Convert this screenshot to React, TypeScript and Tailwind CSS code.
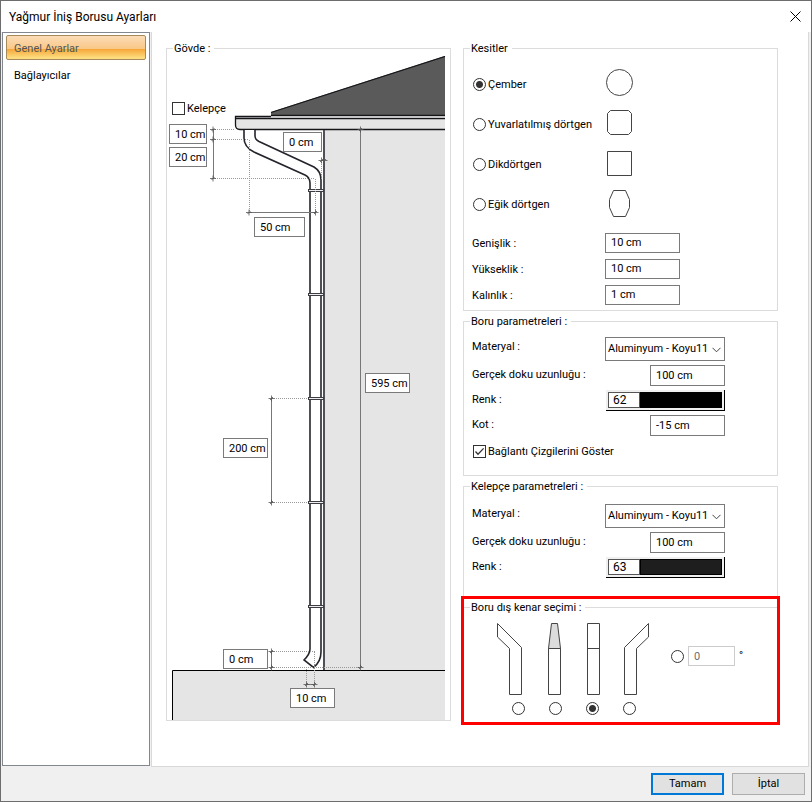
import { useState } from "react";
import type { ReactNode } from "react";
import clsx from "clsx";

const inputStyle = "border border-[#7a7a7a] bg-white pl-[5px] outline-none";
const radioStyle =
  "size-[13px] shrink-0 appearance-none rounded-full border border-[#333] bg-white checked:bg-[radial-gradient(circle,#333_3px,transparent_4px)]";

const Group = ({ title, className, children }: { title: string; className?: string; children: ReactNode }) => (
  <fieldset className={clsx("min-w-0 border-[#dcdcdc]", className)}>
    <legend className="ml-1.5 h-4 pr-1 pl-px leading-[18px]">{title}</legend>
    {children}
  </fieldset>
);

const Check = ({ label, defaultChecked }: { label: string; defaultChecked?: boolean }) => (
  <label className="flex h-4 items-center gap-0.5">
    <span className="relative flex">
      <input
        type="checkbox"
        defaultChecked={defaultChecked}
        className="peer size-[13px] appearance-none border border-[#333] bg-white"
      />
      <svg viewBox="0 0 13 13" className="pointer-events-none absolute inset-0 hidden size-[13px] peer-checked:block">
        <path d="M2.5 6.5 5 9.2 10.6 3.4" fill="none" stroke="#333" strokeWidth="1.3" />
      </svg>
    </span>
    <span className="pt-0.5">{label}</span>
  </label>
);

/* fields placed on the drawing */
const dimensions = [
  { name: "Oluk mesafesi", value: "10 cm", place: "left-[2px] top-[68px] w-[38px]" },
  { name: "Dirsek yüksekliği", value: "20 cm", place: "left-[2px] top-[91px] w-[38px]" },
  { name: "Duvar mesafesi", value: "0 cm", place: "left-[116px] top-[76px] w-[39px]" },
  { name: "Dirsek genişliği", value: "50 cm", place: "left-[87px] top-[161px] w-[51px]" },
  { name: "Boru yüksekliği", value: "595 cm", place: "left-[198px] top-[317px] w-[45px]" },
  { name: "Kelepçe aralığı", value: "200 cm", place: "left-[56px] top-[382px] w-[45px]" },
  { name: "Alt dirsek yüksekliği", value: "0 cm", place: "left-[56px] top-[593px] w-[45px]" },
  { name: "Alt dirsek genişliği", value: "10 cm", place: "left-[123px] top-[632px] w-[45px]" },
];

const ticks = [
  [213, 129.5], [213, 139.5], [213, 178.5],
  [249, 212.5], [315.5, 212.5],
  [321.5, 160.5], [324.5, 160.5],
  [271.5, 398.5], [271.5, 502.5],
  [271.5, 651.5], [271.5, 667.5],
  [306.5, 684.5], [314.5, 684.5],
  [360.5, 129.5], [360.5, 667.5],
];

const Drawing = () => (
  <svg width="283" height="664" viewBox="167 56 283 664" fill="none" className="block">
    <path d="M324 130H445V670H324z" fill="#e5e5e5" />
    <path d="M172.5 720V670.5H445V720" fill="#e5e5e5" />
    <path d="M172.5 720V670.5H445" stroke="#000" />
    <path d="M271 112 445 56V116H271z" fill="#5a5a5a" />
    <path d="M271 112.5 445 56.5M271 115.5H445" stroke="#15151a" strokeWidth="1.3" />
    <path d="M235.5 116.5V125Q235.5 129.5 240 129.5H445V118.5H235.5" fill="#e5e5e5" />
    <path d="M271 116.5H235.5V125Q235.5 129.5 240 129.5H445M235.5 118.5H445" stroke="#15151a" strokeWidth="1.3" />
    <path d="M324 130V670" stroke="#505158" strokeWidth="2" />
    <path
      d="M244 130V138C244 145 248 149 254 152L305 175Q310 177.5 310 183V649Q310 654 304 660L313.5 667.5C318 664 321 658 321 652V180C321 174 319 170 314 167L259 141.5Q255 139.5 255 136V130"
      fill="#fff"
      stroke="#24252b"
      strokeWidth="1.6"
    />
    {[190.5, 294.5, 398.5, 502.5, 606.5].map((y) => (
      <rect key={y} x="308.5" y={y - 1} width="15" height="2" fill="#eee" stroke="#3c3d42" />
    ))}
    <path
      d="M213.5 129.5V178.5M249 212.5H316M271.5 398V503M271.5 651V668M306 684.5H315M360.5 129V668"
      stroke="#777"
    />
    <path
      d="M213 129.5H235M213 139.5H249M213 178.5H315M249.5 140V213M315.5 179V213M321.5 160V180M272 398.5H308M272 502.5H308M272 651.5H315M272 667.5H360M306.5 669V684M314.5 652V684"
      stroke="#999"
      strokeDasharray="1 1"
    />
    {ticks.map(([x, y]) => (
      <path key={`${x} ${y}`} d={`M${x - 3} ${y}h6M${x} ${y - 3}v6M${x - 1.5} ${y + 1.5}l3 -3`} stroke="#555" strokeWidth="0.8" />
    ))}
  </svg>
);

const sections = [
  { name: "Çember", shape: <circle cx="14.5" cy="12.5" r="13" /> },
  { name: "Yuvarlatılmış dörtgen", shape: <path d="M5.5 .5h18l3 3v18l-3 3h-18l-3-3v-18z" /> },
  { name: "Dikdörtgen", shape: <path d="M2.5 1.5h24v24h-24z" /> },
  { name: "Eğik dörtgen", shape: <path d="M8.5 .5h12l4 9v8l-4 9h-12l-4-9v-8z" /> },
];

const edges = [
  { name: "Sola eğik", shape: <path d="M-2.5 .5 21.5 24.5V71.5H9.5V25.5L-2.5 14z" /> },
  {
    name: "Daralan",
    shape: (
      <>
        <path d="M14.5 .5h6l3 25h-12z" fill="#dcdcdc" />
        <path d="M11.5 25.5h12v46h-12z" />
      </>
    ),
  },
  { name: "Düz", shape: <path d="M13.5 .5h12v71h-12zM13.5 25.5h12" /> },
  { name: "Sağa eğik", shape: <path d="M37.5 .5 13.5 24.5V71.5H25.5V25.5L37.5 14z" /> },
];

const PipeParams = ({ id, color, swatch, children }: { id: string; color: string; swatch: string; children?: ReactNode }) => (
  <div className="grid grid-cols-[133px_120px] gap-y-1 leading-5">
    <label htmlFor={`${id}-material`}>Materyal :</label>
    <div className="relative">
      <select
        id={`${id}-material`}
        className="block h-6 w-full appearance-none border border-[#7a7a7a] bg-white pl-0.5 outline-none"
      >
        <option>Aluminyum - Koyu11</option>
      </select>
      <svg viewBox="0 0 9 6" className="pointer-events-none absolute top-2.5 right-1 h-1.5 w-[9px]">
        <path d="M.5 .8 4.5 4.8 8.5 .8" fill="none" stroke="#444" />
      </svg>
    </div>
    <label htmlFor={`${id}-length`}>Gerçek doku uzunluğu :</label>
    <input id={`${id}-length`} defaultValue="100 cm" className={clsx(inputStyle, "h-[21px] w-[75px] justify-self-end")} />
    <label htmlFor={`${id}-color`}>Renk :</label>
    <div className="ml-px flex h-[21px] border-r border-b border-black bg-[#f0f0f0] p-0.5">
      <input id={`${id}-color`} defaultValue={color} className="w-8 border border-[#555] bg-white px-1 text-xs outline-none" />
      <button aria-label="Renk seç" className={clsx("flex-1 border border-black", swatch)} />
    </div>
    {children}
  </div>
);

export default function App() {
  const [page, setPage] = useState("Genel Ayarlar");

  return (
    <div className="flex min-h-screen flex-col border border-[#6d6d6d] bg-[#f0f0f0] font-['Roboto',sans-serif] text-[11px] text-black">
      <header className="flex h-[31px] items-center justify-between bg-white pr-2.5 pl-2">
        <h1 className="text-xs">Yağmur İniş Borusu Ayarları</h1>
        <button aria-label="Kapat">
          <svg width="11" height="11" viewBox="0 0 11 11">
            <path d="M.5 .5 10.5 10.5M10.5 .5 .5 10.5" stroke="#000" />
          </svg>
        </button>
      </header>

      <main className="flex flex-1 gap-px pr-0.5 pl-px">
        <nav className="mb-px flex w-[148px] shrink-0 flex-col gap-0.5 border border-[#828790] bg-white px-[3px] py-0.5">
          {["Genel Ayarlar", "Bağlayıcılar"].map((name) => (
            <button
              key={name}
              onClick={() => setPage(name)}
              className={clsx(
                "h-[25px] rounded-xs border pt-[3px] pl-[7px] text-left",
                page === name
                  ? "border-[#a78a5a] bg-[linear-gradient(#fbdcb8_0%,#fac886_55%,#f6a436_56%,#fddd7f_95%)] text-[#555]"
                  : "border-transparent"
              )}
            >
              {name}
            </button>
          ))}
        </nav>

        <section className="grid flex-1 grid-cols-[285px_1fr] items-start gap-3 border-r border-b border-l border-[#d9d9d9] bg-white pt-2 pr-[30px] pb-10 pl-3.5">
          <Group title="Gövde :" className="border">
            <div className="relative">
              <Drawing />
              <div className="absolute top-11 left-[5px]">
                <Check label="Kelepçe" />
              </div>
              {dimensions.map((d) => (
                <input
                  key={d.name}
                  aria-label={d.name}
                  defaultValue={d.value}
                  className={clsx(inputStyle, "absolute h-5", d.place)}
                />
              ))}
            </div>
          </Group>

          <div className="flex flex-col">
            <Group title="Kesitler" className="border pb-[5px]">
              <div className="px-2 pt-2">
                {sections.map((s, i) => (
                  <label key={s.name} className="grid h-10 grid-cols-[133px_28px] items-center">
                    <span className="flex items-center gap-0.5 whitespace-nowrap pl-px">
                      <input type="radio" name="section" defaultChecked={i === 0} className={radioStyle} />
                      <span className="pt-0.5">{s.name}</span>
                    </span>
                    <svg width="28" height="28" viewBox="0 0 28 28" fill="none" stroke="#444" className="overflow-visible">
                      {s.shape}
                    </svg>
                  </label>
                ))}
                <div className="mt-[9px] grid grid-cols-[133px_75px] gap-y-1.5 leading-[22px]">
                  <label htmlFor="width" className="h-5">Genişlik :</label>
                  <input id="width" defaultValue="10 cm" className={clsx(inputStyle, "h-5")} />
                  <label htmlFor="height" className="h-5">Yükseklik :</label>
                  <input id="height" defaultValue="10 cm" className={clsx(inputStyle, "h-5")} />
                  <label htmlFor="thickness" className="h-5">Kalınlık :</label>
                  <input id="thickness" defaultValue="1 cm" className={clsx(inputStyle, "h-5")} />
                </div>
              </div>
            </Group>

            <Group title="Boru parametreleri :" className="mt-0.5 border">
              <div className="px-2 pt-2 pb-4">
                <PipeParams id="pipe" color="62" swatch="bg-black">
                  <label htmlFor="pipe-level">Kot :</label>
                  <input
                    id="pipe-level"
                    defaultValue="-15 cm"
                    className={clsx(inputStyle, "h-[21px] w-[75px] justify-self-end")}
                  />
                </PipeParams>
                <div className="mt-[7px] pl-px">
                  <Check label="Bağlantı Çizgilerini Göster" defaultChecked />
                </div>
              </div>
            </Group>

            <Group title="Kelepçe parametreleri :" className="mt-0.5 border border-b-0">
              <div className="px-2 pt-2.5 pb-[18px]">
                <PipeParams id="clamp" color="63" swatch="bg-[#1e1e1e]" />
              </div>
            </Group>

            <div className="-mx-0.5 border-3 border-[#ff0000]">
              <Group title="Boru dış kenar seçimi :" className="border-t">
                <div className="flex items-start pt-2 pb-[7px] pl-9">
                  {edges.map((e, i) => (
                    <label key={e.name} className="flex w-[37px] flex-col items-center gap-[7px]">
                      <svg width="37" height="72" viewBox="0 0 37 72" fill="none" stroke="#444" className="overflow-visible">
                        {e.shape}
                      </svg>
                      <input type="radio" name="edge" aria-label={e.name} defaultChecked={i === 2} className={radioStyle} />
                    </label>
                  ))}
                  <div className="mt-[23px] ml-[23px] flex items-center gap-1">
                    <input type="radio" name="edge" aria-label="Açı" className={radioStyle} />
                    <input
                      aria-label="Açı değeri"
                      disabled
                      defaultValue="0"
                      className="h-5 w-[47px] border border-[#ccc] bg-white px-[5px] text-[#6d6d6d]"
                    />
                    <span>°</span>
                  </div>
                </div>
              </Group>
            </div>
          </div>
        </section>
      </main>

      <footer className="flex h-[34px] items-center justify-end gap-2 pr-1.5">
        <button className="h-[22px] w-[73px] border-2 border-[#0078d7] bg-[#e1e1e1]">Tamam</button>
        <button className="h-[22px] w-[73px] border border-[#adadad] bg-[#e1e1e1]">İptal</button>
      </footer>
    </div>
  );
}
